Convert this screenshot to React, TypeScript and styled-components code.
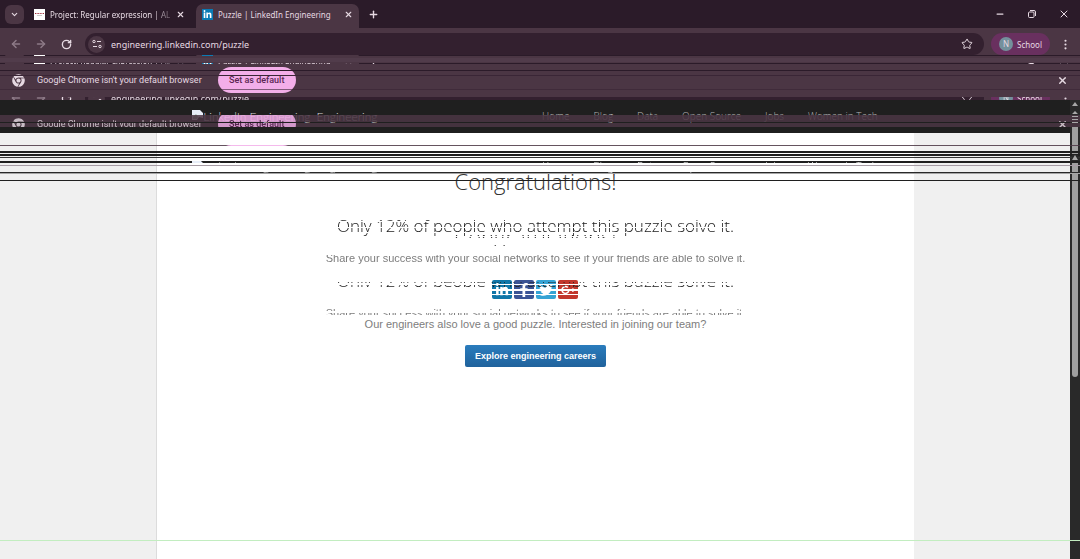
import React from "react";
import styled, { createGlobalStyle, css } from "styled-components";
import { ArrowLeft, ArrowRight, ChevronDown, EllipsisVertical, Minus, Plus, RotateCw, Star, X } from "lucide-react";
import { FaChrome, FaFacebookF, FaGooglePlusG, FaLinkedinIn, FaTwitter } from "react-icons/fa";

const ui = `"Noto Sans", "Open Sans", sans-serif`;
const compact = `Roboto, "Noto Sans", sans-serif`;
const site = `"Open Sans", "Noto Sans", sans-serif`;
const display = `Lato, "Open Sans", sans-serif`;

type Line = [top: number, height: number, color: string];
type Band = [top: number, height: number];

const lineGradient = (lines: Line[]) => {
  const stops = lines.map(
    ([t, h, c]) => `transparent ${t}px, ${c} ${t}px, ${c} ${t + h}px, transparent ${t + h}px`
  );
  return `linear-gradient(to bottom, ${stops.join(", ")})`;
};
const keep = (bands: Band[]) => lineGradient(bands.map(([t, h]) => [t, h, "#000"] as Line));

const Global = createGlobalStyle`
  * { box-sizing: border-box; }
  body { margin: 0; overflow: hidden; background: #f0f0f0; font-family: ${ui}; font-variant-ligatures: none; }
  button, input { font: inherit; border: 0; padding: 0; margin: 0; background: none; color: inherit; }
  button { display: flex; align-items: center; justify-content: center; }
  h1, h2, p, ul { margin: 0; padding: 0; }
  a { color: inherit; text-decoration: none; }
`;

const Window = styled.div`
  position: relative;
  display: flex;
  flex-direction: column;
  min-height: 100vh;
  color: #e6d9e2;
  background: #f0f0f0;
`;

const Strip = styled.div`
  display: flex;
  align-items: flex-end;
  height: 28px;
  padding: 0 10px 0 5px;
  background: #2b1b29;
  font: 8px ${ui};
`;
const TabMenu = styled.button`
  width: 19px;
  height: 19px;
  margin: 0 4px 4px 0;
  border-radius: 6px;
  background: #4b3644;
`;
const TabBox = styled.div<{ $active?: boolean }>`
  display: flex;
  align-items: center;
  gap: 5px;
  width: ${p => (p.$active ? 163 : 168)}px;
  height: 24px;
  padding: 0 ${p => (p.$active ? 6 : 11)}px 4px 6px;
  border-radius: 7px 7px 0 0;
  background: ${p => (p.$active ? "#4b3644" : "transparent")};
`;
const TabTitle = styled.span<{ $fade?: boolean }>`
  flex: 1;
  white-space: nowrap;
  ${p => p.$fade && css`mask-image: linear-gradient(to right, #000 85%, #0004);`}
`;
const Favicon = styled.span<{ $blue?: boolean }>`
  display: flex;
  align-items: center;
  justify-content: center;
  width: 11px;
  height: 11px;
  background: ${p => (p.$blue ? "#0a7bb5" : "#fff")};
  color: ${p => (p.$blue ? "#fff" : "#a0303c")};
  font-size: 9px;
`;
const Spacer = styled.span`
  flex: 1;
`;
const StripButton = styled.button`
  width: 12px;
  height: 28px;
`;
const Controls = styled.div`
  display: flex;
  gap: 20px;
`;
const NewTab = styled(StripButton)`
  margin-left: 8px;
`;

const Bar = styled.div`
  display: flex;
  align-items: center;
  height: 27px;
  padding: 5px 8px 0 10px;
  background: #4b3644;
`;
const NavButton = styled.button<{ $dim?: boolean }>`
  width: 12px;
  height: 12px;
  margin-right: 13px;
  color: ${p => (p.$dim ? "#8d7a87" : "#e6d9e2")};
`;
const Omnibox = styled.div`
  display: flex;
  flex: 1;
  align-items: center;
  height: 22px;
  padding: 0 11px 0 3px;
  border-radius: 11px;
  background: #33202f;
  font-size: 9px;
`;
const SiteInfo = styled.button`
  width: 17px;
  height: 17px;
  margin-right: 6px;
  border-radius: 50%;
  background: #4b3644;
`;
const Address = styled.input`
  flex: 1;
  min-width: 0;
  outline: 0;
`;
const Profile = styled.button`
  gap: 4px;
  width: 59px;
  height: 22px;
  margin: 0 9px 0 7px;
  border-radius: 11px;
  background: #69305f;
  font-size: 8px;
`;
const Avatar = styled.span`
  width: 14px;
  border-radius: 50%;
  background: #74909c;
  font-size: 8px;
  line-height: 14px;
`;

const Info = styled.div<{ $echo?: boolean }>`
  display: flex;
  align-items: center;
  height: ${p => (p.$echo ? 26 : 45)}px;
  padding: ${p => (p.$echo ? 0 : "5px")} 12px 0;
  background: #4b3644;
  font: 9px ${compact};
`;
const InfoText = styled.span`
  margin: 0 16px 0 12px;
`;
const DefaultButton = styled.button`
  width: 78px;
  height: 26px;
  border-radius: 13px;
  background: #f3aee9;
  color: #5c2754;
  font-weight: 500;
`;

const Viewport = styled.div`
  display: flex;
  flex: 1;
`;
const Page = styled.div`
  display: flex;
  flex: 1;
  flex-direction: column;
  min-width: 0;
`;
const Masthead = styled.header<{ $clear?: boolean }>`
  height: 33px;
  background: ${p => (p.$clear ? "transparent" : "#1f1f1f")};
  color: ${p => (p.$clear ? "#fff" : "#b5b5b5")};
  font: 300 10px/33px ${site};
`;
const MastheadInner = styled.div`
  display: flex;
  align-items: center;
  width: 70.8%;
  margin: 0 auto;
  padding: 0 36px;
  white-space: nowrap;
`;
const Brand = styled.a`
  display: flex;
  align-items: center;
  color: #d8d8d8;
  font: 300 12px/33px ${display};
  gap: 6px;
`;
const Nav = styled.nav`
  display: flex;
  gap: 24px;
  margin-left: auto;
`;
const Main = styled.main`
  position: relative;
  display: flex;
  flex: 1;
  justify-content: center;
`;
const Sheet = styled.div<{ $clear?: boolean }>`
  display: flex;
  flex-direction: column;
  align-items: center;
  width: 70.8%;
  padding-top: 32px;
  border-left: 1px solid ${p => (p.$clear ? "transparent" : "#dcdcdc")};
  background: ${p => (p.$clear ? "transparent" : "#fff")};
  color: #7d7d7d;
  font: 11px/16px "Liberation Sans", Arial, sans-serif;
  white-space: nowrap;
`;
const Title = styled.h1`
  color: #333;
  font: 300 22px/32px ${site};
`;
const Subtitle = styled.h2`
  margin-top: 17px;
  color: #222;
  font: 300 17px/24px ${site};
`;
const Cut = styled.div<{ $rows: Band[] }>`
  mask-image: ${p => keep(p.$rows)};
`;
const Share = styled.p`
  margin-top: 12px;
`;
const Social = styled.div`
  display: flex;
  gap: 2px;
  margin: 14px 0 17px;
`;
const SocialButton = styled.a<{ $color: string }>`
  display: flex;
  align-items: center;
  justify-content: center;
  width: 20px;
  height: 19px;
  border-radius: 2px;
  background: ${p => p.$color};
  color: #fff;
  font-size: 14px;
`;
const Careers = styled.a`
  height: 22px;
  margin-top: 13px;
  padding: 0 10px;
  border-radius: 2px;
  background: linear-gradient(#2a7cbd, #20629c);
  color: #fff;
  font-size: 9px;
  font-weight: 700;
  line-height: 22px;
`;

const Track = styled.div`
  width: 10px;
  padding: 27px 2px 0;
  background: #292929;
`;
const Thumb = styled.div`
  height: 250px;
  border-radius: 0 0 4px 4px;
  background: #9f9f9f;
`;

const Echo = styled.div<{ $top: number; $rows: Band[]; $faint?: boolean }>`
  position: absolute;
  inset: ${p => p.$top}px 0 auto;
  opacity: ${p => (p.$faint ? 0.85 : 1)};
  mask-image: ${p => keep(p.$rows)};
  pointer-events: none;
`;
const SheetEcho = styled(Echo)`
  display: flex;
  justify-content: center;
`;
const MastheadEcho = styled(Echo)`
  right: 10px;
`;
const Scanlines = styled.div<{ $lines: Line[] }>`
  position: absolute;
  inset: 0;
  background: ${p => lineGradient(p.$lines)};
  pointer-events: none;
`;
const ArrowColumn = styled.svg`
  position: absolute;
  top: 100px;
  right: 0;
`;

const scanlines: Line[] = [
  [55, 1, "#2b1b29"],
  [58, 4, "#513c4b"],
  [63, 1, "#2b1b29"],
  [70, 1, "#2b1b29"],
  [75, 1, "#3a2636"],
  [89, 1, "#38243399"],
  [97, 1, "#33202f"],
  [99, 1, "#3b2937"],
  [151, 2, "#1f1f1f"],
  [154, 2, "#1f1f1f"],
  [157, 1, "#333"],
  [161, 2, "#1f1f1f"],
  [165, 1, "#a79ca5"],
  [172, 1, "#292929"],
  [173, 1, "#a5a5a5"],
  [180, 1, "#1f1f1f"],
  [540, 1, "#c2edc0"],
];

function TabStrip() {
  return (
    <Strip>
      <TabMenu aria-label="Search tabs"><ChevronDown size={9} strokeWidth={3} /></TabMenu>
      <TabBox>
        <Favicon>
          <svg width="9" height="4" viewBox="0 0 9 4" fill="none" stroke="currentColor">
            <path d="M0 1.5h9" strokeDasharray="1 .6" /><path d="M2 3.5h5" stroke="#ccc" />
          </svg>
        </Favicon>
        <TabTitle $fade>Project: Regular expression | AL</TabTitle>
        <X size={9} strokeWidth={3} />
      </TabBox>
      <TabBox $active>
        <Favicon $blue><FaLinkedinIn /></Favicon>
        <TabTitle>Puzzle | LinkedIn Engineering</TabTitle>
        <X size={9} strokeWidth={3} />
      </TabBox>
      <NewTab aria-label="New tab"><Plus size={11} strokeWidth={3} /></NewTab>
      <Spacer />
      <Controls>
        <StripButton aria-label="Minimize"><Minus size={10} strokeWidth={3} /></StripButton>
        <StripButton aria-label="Restore">
          <svg width="8" height="8" viewBox="0 0 8 8" fill="none" stroke="currentColor">
            <rect x=".5" y="2" width="5.5" height="5.5" rx="1" /><path d="M2 .5h4a1.5 1.5 0 0 1 1.5 1.5v4" />
          </svg>
        </StripButton>
        <StripButton aria-label="Close"><X size={12} /></StripButton>
      </Controls>
    </Strip>
  );
}

function Toolbar() {
  return (
    <Bar>
      <NavButton $dim aria-label="Back"><ArrowLeft size={12} strokeWidth={3} /></NavButton>
      <NavButton $dim aria-label="Forward"><ArrowRight size={12} strokeWidth={3} /></NavButton>
      <NavButton aria-label="Reload"><RotateCw size={11} strokeWidth={3} /></NavButton>
      <Omnibox>
        <SiteInfo aria-label="Site information">
          <svg width="10" height="10" viewBox="0 0 10 10" fill="none" stroke="currentColor">
            <circle cx="2" cy="2.5" r="1.2" /><path d="M5 2.5h4M1 7.5h4" /><circle cx="8" cy="7.5" r="1.2" />
          </svg>
        </SiteInfo>
        <Address aria-label="Address" readOnly value="engineering.linkedin.com/puzzle" />
        <Star size={12} />
      </Omnibox>
      <Profile><Avatar>N</Avatar>School</Profile>
      <EllipsisVertical size={13} />
    </Bar>
  );
}

function InfoBar({ echo }: { echo?: boolean }) {
  return (
    <Info $echo={echo}>
      <FaChrome size={13} />
      <InfoText>Google Chrome isn't your default browser</InfoText>
      <DefaultButton>Set as default</DefaultButton>
      <Spacer />
      <X size={11} strokeWidth={3} />
    </Info>
  );
}

function SiteHeader({ clear }: { clear?: boolean }) {
  return (
    <Masthead $clear={clear}>
      <MastheadInner>
        <Brand href="#">
          <span>
            <svg width="11" height="11" viewBox="0 0 11 11">
              <path d="M0 0h8l3 3v5L7 7l-2 3H0z" fill="#e8eef8" /><path d="M1 7l3-3 2 3-1 2H1z" fill="#8fae9b" />
            </svg>
            LinkedIn Engineering
          </span>
          <span>Engineering</span>
        </Brand>
        <Nav>
          {["Home", "Blog", "Data", "Open Source", "Jobs", "Women in Tech"].map(t => <a key={t} href="#">{t}</a>)}
        </Nav>
      </MastheadInner>
    </Masthead>
  );
}

function Article({ clear }: { clear?: boolean }) {
  return (
    <Sheet $clear={clear}>
      <Title>Congratulations!</Title>
      <Cut $rows={clear ? [[0, 60]] : [[21, 3], [25, 5], [31, 4], [36, 3]]}>
        <Subtitle>Only 12% of people who attempt this puzzle solve it.</Subtitle>
      </Cut>
      <Cut $rows={clear ? [[0, 60]] : [[17, 11]]}>
        <Share>Share your success with your social networks to see if your friends are able to solve it.</Share>
      </Cut>
      <Cut $rows={[[13, 5], [19, 4], [25, 3], [29, 5]]}>
        <Social>
          <SocialButton href="#" aria-label="LinkedIn" $color="#0f76a8"><FaLinkedinIn /></SocialButton>
          <SocialButton href="#" aria-label="Facebook" $color="#3b5495"><FaFacebookF /></SocialButton>
          <SocialButton href="#" aria-label="Twitter" $color="#35a3d4"><FaTwitter /></SocialButton>
          <SocialButton href="#" aria-label="Google Plus" $color="#c2362c"><FaGooglePlusG /></SocialButton>
        </Social>
      </Cut>
      <p>Our engineers also love a good puzzle. Interested in joining our team?</p>
      <Careers href="#">Explore engineering careers</Careers>
    </Sheet>
  );
}

export default function App() {
  return (
    <Window>
      <Global />
      <TabStrip />
      <Toolbar />
      <InfoBar />
      <Viewport>
        <Page>
          <SiteHeader />
          <Main>
            <Article />
            <SheetEcho aria-hidden inert $top={55} $rows={[[47, 1], [49, 1], [57, 1], [86, 1], [94, 1], [97, 2], [121, 2], [125, 2]]}>
              <Article clear />
            </SheetEcho>
          </Main>
        </Page>
        <Track><Thumb /></Track>
      </Viewport>
      <Scanlines $lines={scanlines} />
      <Echo aria-hidden inert $top={46} $rows={[[9, 1], [17, 1]]}><TabStrip /></Echo>
      <Echo aria-hidden inert $top={82} $rows={[[15, 3]]}><Toolbar /></Echo>
      <Echo aria-hidden inert $faint $top={111} $rows={[[4, 7], [12, 4]]}><InfoBar echo /></Echo>
      <Echo aria-hidden inert $faint $top={120} $rows={[[25, 1]]}><InfoBar echo /></Echo>
      <MastheadEcho aria-hidden inert $top={150} $rows={[[11, 2], [22, 2]]}><SiteHeader clear /></MastheadEcho>
      <ArrowColumn width="10" height="64" viewBox="0 0 10 64" fill="#a8a8a8">
        <path d="M5 2l3 4H2zM5 11l3 3H2zM2 16h6v1H2zM2 19h6v1H2zM2 22h6v1H2z" />
        <path d="M2 55h6v6H2z" fill="#292929" /><path d="M5 55l3 5H2z" />
      </ArrowColumn>
    </Window>
  );
}
